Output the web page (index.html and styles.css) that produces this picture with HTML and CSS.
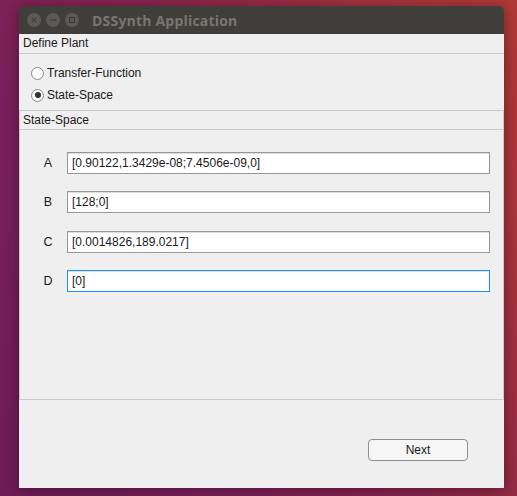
FILE: index.html
```html
<!DOCTYPE html>
<html>
<head>
<meta charset="utf-8">
<link rel="stylesheet" href="styles.css">
</head>
<body>
<div class="window">
  <div class="titlebar">
    <div class="controls">
      <span class="ctl"><svg width="14" height="14" viewBox="0 0 14 14"><path d="M4.8 4.8 L9.2 9.2 M9.2 4.8 L4.8 9.2" stroke="#3c3b37" stroke-width="1.1" fill="none"/></svg></span>
      <span class="ctl"><svg width="14" height="14" viewBox="0 0 14 14"><path d="M3.5 7 H10.5" stroke="#3c3b37" stroke-width="1.2" fill="none"/></svg></span>
      <span class="ctl"><svg width="14" height="14" viewBox="0 0 14 14"><rect x="4.5" y="4.5" width="5" height="5" stroke="#3c3b37" stroke-width="1.1" fill="none"/></svg></span>
    </div>
    <div class="title">DSSynth Application</div>
  </div>
  <div class="content">
    <div class="section-head">Define Plant</div>
    <div class="radios">
      <label class="radio"><span class="dot"></span>Transfer-Function</label>
      <label class="radio"><span class="dot checked"></span>State-Space</label>
    </div>
    <div class="panel">
      <div class="panel-head">State-Space</div>
      <div class="fields">
        <span class="lbl">A</span><div class="field">[0.90122,1.3429e-08;7.4506e-09,0]</div>
        <span class="lbl">B</span><div class="field">[128;0]</div>
        <span class="lbl">C</span><div class="field">[0.0014826,189.0217]</div>
        <span class="lbl">D</span><div class="field focus">[0]</div>
      </div>
    </div>
    <div class="footer">
      <button class="btn">Next</button>
    </div>
  </div>
</div>
</body>
</html>
```

FILE: styles.css
```css
html, body {
  margin: 0;
  padding: 0;
}
body {
  width: 517px;
  height: 496px;
  overflow: hidden;
  background: linear-gradient(62deg, #6d1d55 0%, #7a205a 30%, #8e2848 60%, #a8353a 85%, #b03a36 100%);
  font-family: "Liberation Sans", Arial, sans-serif;
  font-size: 12px;
  color: #1a1a1a;
}
.window {
  margin: 6px 0 0 19px;
  width: 485px;
  box-shadow: 0 2px 14px rgba(30, 0, 20, 0.45);
  border-radius: 5px 5px 0 0;
}
.titlebar {
  height: 28px;
  background: #3f3e3a;
  border-radius: 5px 5px 0 0;
  display: flex;
  align-items: center;
  padding-left: 8px;
}
.controls {
  display: flex;
  gap: 5px;
}
.ctl {
  width: 14px;
  height: 14px;
  border-radius: 50%;
  background: #5b5a56;
  display: flex;
}
.title {
  margin-left: 13px;
  font-family: "Open Sans", "DejaVu Sans", sans-serif;
  font-weight: 700;
  font-size: 14px;
  color: #78776f;
  letter-spacing: 0.2px;
}
.content {
  background: #efefef;
  height: 454px;
  display: flex;
  flex-direction: column;
}
.section-head {
  height: 19px;
  line-height: 19px;
  padding-left: 4px;
  border-bottom: 1px solid #cacaca;
  box-sizing: border-box;
  height: 20px;
}
.radios {
  height: 56px;
  padding-top: 12px;
  box-sizing: border-box;
  display: flex;
  flex-direction: column;
  gap: 8px;
}
.radio {
  display: flex;
  align-items: center;
  height: 14px;
  padding-left: 12px;
}
.dot {
  width: 11px;
  height: 11px;
  border: 1px solid #8b8b8b;
  border-radius: 50%;
  background: #fdfdfd;
  margin-right: 3px;
  display: flex;
  align-items: center;
  justify-content: center;
}
.dot.checked::after {
  content: "";
  width: 6px;
  height: 6px;
  border-radius: 50%;
  background: #333;
}
.panel {
  border: 1px solid #cacaca;
  height: 290px;
  box-sizing: border-box;
}
.panel-head {
  height: 19px;
  line-height: 18px;
  padding-left: 3px;
  border-bottom: 1px solid #cacaca;
  box-sizing: border-box;
}
.fields {
  display: grid;
  grid-template-columns: 20px 1fr;
  grid-auto-rows: 22px;
  column-gap: 9px;
  row-gap: 17.3px;
  padding: 22px 13px 0 18px;
  align-items: center;
}
.lbl {
  text-align: center;
  font-size: 12.5px;
}
.field {
  height: 22px;
  box-sizing: border-box;
  border: 1px solid #979797;
  background: #fff;
  box-shadow: inset 0 1px 0 #dedede;
  padding-left: 4px;
  line-height: 20px;
  font-size: 12px;
}
.field.focus {
  border-color: #1f93e6;
}
.footer {
  flex: 1;
  display: flex;
  justify-content: flex-end;
  align-items: flex-start;
  padding: 39px 36px 0 0;
}
.btn {
  width: 100px;
  height: 22px;
  border: 1px solid #8f8f8f;
  border-radius: 4px;
  background: #f6f6f6;
  font-family: "Liberation Sans", Arial, sans-serif;
  font-size: 12px;
  color: #1a1a1a;
  padding: 0;
}
```
